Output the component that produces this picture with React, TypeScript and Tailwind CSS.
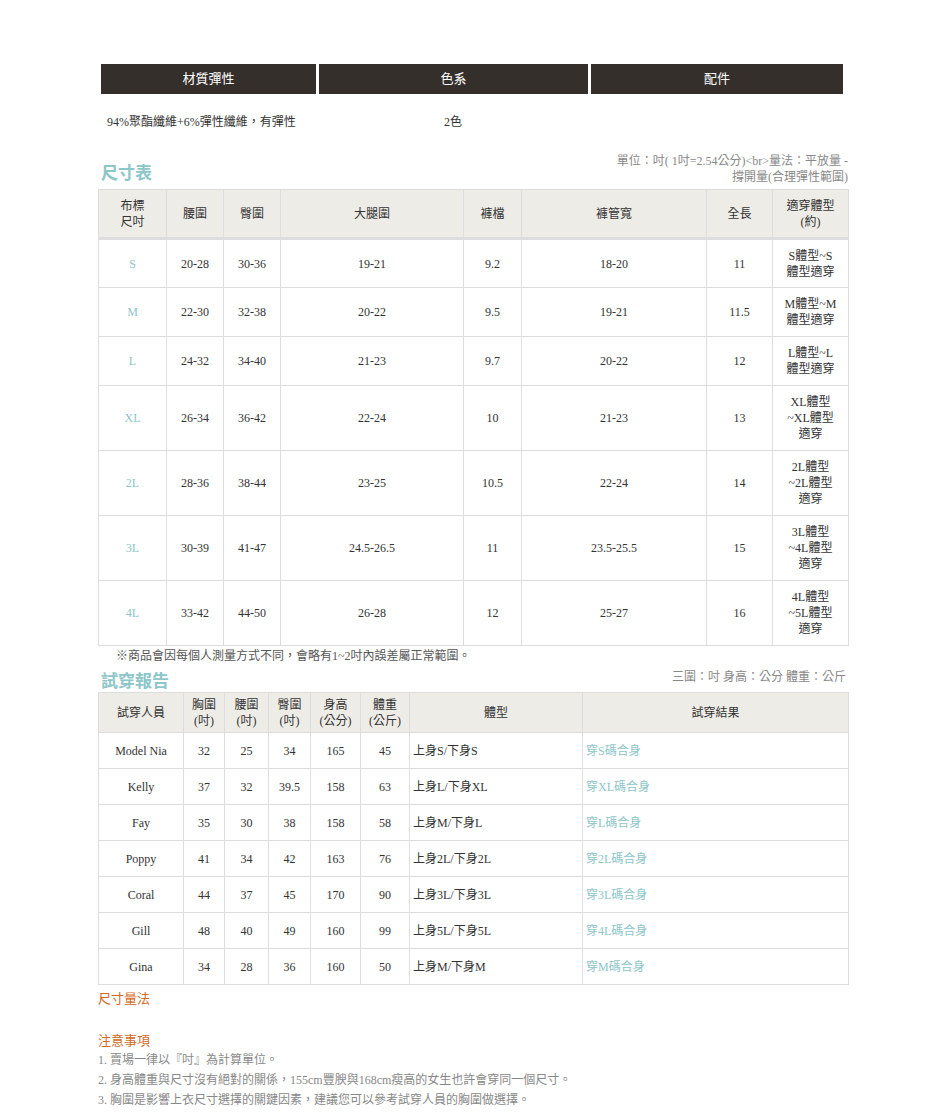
const F = { fontFamily: '"Liberation Serif", "Noto Sans CJK TC", serif' };
const sizes = [
  ['S','20-28','30-36','19-21','9.2','18-20','11',['S體型~S','體型適穿']],
  ['M','22-30','32-38','20-22','9.5','19-21','11.5',['M體型~M','體型適穿']],
  ['L','24-32','34-40','21-23','9.7','20-22','12',['L體型~L','體型適穿']],
  ['XL','26-34','36-42','22-24','10','21-23','13',['XL體型','~XL體型','適穿']],
  ['2L','28-36','38-44','23-25','10.5','22-24','14',['2L體型','~2L體型','適穿']],
  ['3L','30-39','41-47','24.5-26.5','11','23.5-25.5','15',['3L體型','~4L體型','適穿']],
  ['4L','33-42','44-50','26-28','12','25-27','16',['4L體型','~5L體型','適穿']],
] as const;
const trial = [
  ['Model Nia','32','25','34','165','45','上身S/下身S','穿S碼合身'],
  ['Kelly','37','32','39.5','158','63','上身L/下身XL','穿XL碼合身'],
  ['Fay','35','30','38','158','58','上身M/下身L','穿L碼合身'],
  ['Poppy','41','34','42','163','76','上身2L/下身2L','穿2L碼合身'],
  ['Coral','44','37','45','170','90','上身3L/下身3L','穿3L碼合身'],
  ['Gill','48','40','49','160','99','上身5L/下身5L','穿4L碼合身'],
  ['Gina','34','28','36','160','50','上身M/下身M','穿M碼合身'],
];
const w1 = [68,57,57,183,58,185,66,76];
const w2 = [85,41,44,42,50,49,173,266];
const td = 'border border-[#ddd] text-center align-middle';
export default function App() {
  return (
    <div style={F} className="w-[950px] h-[1112px] bg-white text-[12px] text-[#333] pt-[64px] pl-[98px]">
      <div className="w-[750px]">
        <div className="flex gap-[3px] px-[3px] text-white text-[13px]">
          <div className="w-[215px] h-[30px] bg-[#352f2b] flex items-center justify-center">材質彈性</div>
          <div className="w-[269px] h-[30px] bg-[#352f2b] flex items-center justify-center">色系</div>
          <div className="w-[252px] h-[30px] bg-[#352f2b] flex items-center justify-center">配件</div>
        </div>
        <div className="flex h-[56px] items-center px-[9px]">
          <div className="w-[337px]">94%聚酯纖維+6%彈性纖維，有彈性</div>
          <div>2色</div>
        </div>
        <div className="flex justify-between items-end h-[39px] pb-[4px]">
          <div className="text-[17px] font-bold text-[#8cc6c9] leading-none mb-[3px] pl-[3px]">尺寸表</div>
          <div className="text-right text-[#888] leading-[16px] text-[12px]">單位：吋( 1吋=2.54公分)&lt;br&gt;量法：平放量 -<br/>撐開量(合理彈性範圍)</div>
        </div>
        <table className="border-collapse table-fixed w-[750px]">
          <colgroup>{w1.map((w,i)=><col key={i} style={{width:w}}/>)}</colgroup>
          <thead>
            <tr className="h-[49px] bg-[#eeece7] leading-[16px]">
              {['布標|尺吋','腰圍','臀圍','大腿圍','褲檔','褲管寬','全長','適穿體型|(約)'].map((h,i)=>
                <th key={i} className={td+' font-normal border-b-[3px]'}>{h.split('|').map((l,j)=><div key={j}>{l}</div>)}</th>)}
            </tr>
          </thead>
          <tbody>
            {sizes.map((r,i)=>(
              <tr key={i} className={i<3?'h-[49px]':'h-[65px]'}>
                <td className={td+' text-[#8cc6c9]'}>{r[0]}</td>
                {r.slice(1,7).map((c,j)=><td key={j} className={td}>{c as string}</td>)}
                <td className={td+' leading-[16px]'}>{(r[7] as readonly string[]).map((l,j)=><div key={j}>{l}</div>)}</td>
              </tr>
            ))}
          </tbody>
        </table>
        <div className="pl-[18px] h-[20px] flex items-center text-[#555]">※商品會因每個人測量方式不同，會略有1~2吋內誤差屬正常範圍。</div>
        <div className="flex justify-between items-end h-[26px] pb-[2px]">
          <div className="text-[17px] font-bold text-[#8cc6c9] leading-none pl-[3px]">試穿報告</div>
          <div className="text-[#888] pr-[2px] mb-[4px]">三圍：吋 身高：公分 體重：公斤</div>
        </div>
        <table className="border-collapse table-fixed w-[750px]">
          <colgroup>{w2.map((w,i)=><col key={i} style={{width:w}}/>)}</colgroup>
          <thead>
            <tr className="h-[40px] bg-[#eeece7] leading-[16px]">
              {['試穿人員','胸圍|(吋)','腰圍|(吋)','臀圍|(吋)','身高|(公分)','體重|(公斤)','體型','試穿結果'].map((h,i)=>
                <th key={i} className={td+' font-normal'}>{h.split('|').map((l,j)=><div key={j}>{l}</div>)}</th>)}
            </tr>
          </thead>
          <tbody>
            {trial.map((r,i)=>(
              <tr key={i} className="h-[36px]">
                {r.slice(0,6).map((c,j)=><td key={j} className={td}>{c}</td>)}
                <td className="border border-[#ddd] pl-[3px]">{r[6]}</td>
                <td className="border border-[#ddd] pl-[3px] text-[#8cc6c9]">{r[7]}</td>
              </tr>
            ))}
          </tbody>
        </table>
        <div className="text-[#d2691e] text-[13px] mt-[4px]">尺寸量法</div>
        <div className="text-[#d2691e] text-[13px] mt-[22px]">注意事項</div>
        <div className="text-[#888] leading-[20px]">
          <div>1. 賣場一律以『吋』為計算單位。</div>
          <div>2. 身高體重與尺寸沒有絕對的關係，155cm豐腴與168cm瘦高的女生也許會穿同一個尺寸。</div>
          <div>3. 胸圍是影響上衣尺寸選擇的關鍵因素，建議您可以參考試穿人員的胸圍做選擇。</div>
        </div>
      </div>
    </div>
  );
}
